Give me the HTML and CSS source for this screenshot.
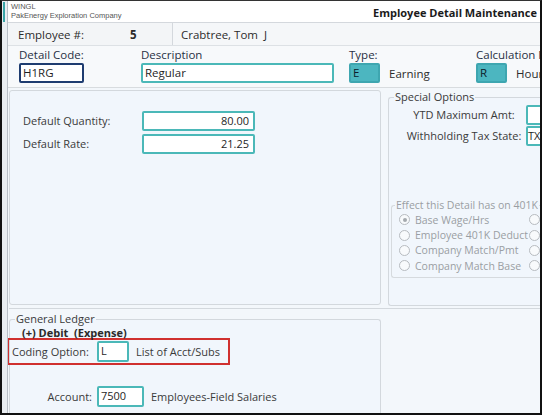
FILE: index.html
```html
<!DOCTYPE html>
<html>
<head>
<meta charset="utf-8">
<link rel="stylesheet" href="styles.css">
</head>
<body>
<div class="frame">
  <div class="side"><div class="side-mark"></div></div>
  <div class="main">
    <div class="header">
      <div class="co">
        <div class="co-app">WINGL</div>
        <div class="co-name">PakEnergy Exploration Company</div>
      </div>
      <div class="title">Employee Detail Maintenance</div>
    </div>
    <div class="emp-row">
      <div class="emp-box"><span class="emp-label">Employee #:</span><span class="emp-num">5</span></div>
      <div class="emp-name">Crabtree, Tom&nbsp; J</div>
    </div>
    <div class="detail-row">
      <div class="fld f-code">
        <div class="flabel">Detail Code:</div>
        <div class="inp inp-code">H1RG</div>
      </div>
      <div class="fld f-desc">
        <div class="flabel">Description</div>
        <div class="inp inp-desc">Regular</div>
      </div>
      <div class="fld f-type">
        <div class="flabel">Type:</div>
        <div class="pair"><div class="inp inp-fill">E</div><span class="ptext">Earning</span></div>
      </div>
      <div class="fld f-calc">
        <div class="flabel">Calculation Method:</div>
        <div class="pair"><div class="inp inp-fill">R</div><span class="ptext">Hourly</span></div>
      </div>
    </div>
    <div class="body">
      <div class="top-grid">
        <div class="panel p-default">
          <div class="row"><span class="rlabel">Default Quantity:</span><div class="inp inp-num">80.00</div></div>
          <div class="row"><span class="rlabel">Default Rate:</span><div class="inp inp-num">21.25</div></div>
        </div>
        <fieldset class="panel p-special">
          <legend>Special Options</legend>
          <div class="srow first"><span class="slabel">YTD Maximum Amt:</span><div class="inp inp-s"></div></div>
          <div class="srow"><span class="slabel">Withholding Tax State:</span><div class="inp inp-s">TX</div></div>
          <fieldset class="p401">
            <legend>Effect this Detail has on 401K</legend>
            <div class="radios">
              <div class="rad"><span class="dot on"></span>Base Wage/Hrs</div>
              <div class="rad"><span class="dot"></span>Employee 401K Deduct</div>
              <div class="rad"><span class="dot"></span>Company Match/Pmt</div>
              <div class="rad"><span class="dot"></span>Company Match Base</div>
            </div>
            <div class="radios r2">
              <div class="rad"><span class="dot"></span></div>
              <div class="rad"><span class="dot"></span></div>
              <div class="rad"><span class="dot"></span></div>
              <div class="rad"><span class="dot"></span></div>
            </div>
          </fieldset>
        </fieldset>
      </div>
      <div class="sep"></div>
      <div class="bottom-grid">
        <fieldset class="panel p-gl">
          <legend>General Ledger</legend>
          <div class="debit">(+) Debit&nbsp; (Expense)</div>
          <div class="coding">
            <span class="clabel">Coding Option:</span>
            <div class="inp inp-l">L</div>
            <span class="ctext">List of Acct/Subs</span>
          </div>
          <div class="acct">
            <span class="alabel">Account:</span>
            <div class="inp inp-a">7500</div>
            <span class="ctext">Employees-Field Salaries</span>
          </div>
        </fieldset>
      </div>
    </div>
  </div>
</div>
</body>
</html>
```
FILE: styles.css
```css
* { box-sizing: border-box; }
html, body { margin: 0; padding: 0; }
body {
  width: 542px; height: 415px; overflow: hidden;
  font-family: "Open Sans", "Noto Sans", sans-serif;
  font-size: 11px; color: #3a3a3a;
  background: #000;
}
.frame {
  display: flex; width: 542px; height: 415px;
  border-left: 2px solid #111; border-right: 2px solid #111;
  border-bottom: 2px solid #111; border-top: 1px solid #333;
  background: #f3f7fb; overflow: hidden;
}
.side {
  width: 6px; flex: none; background: #e9edf1; border-right: 1px solid #b8bec6;
  position: relative;
}
.side-mark { position: absolute; left: 1px; top: 1px; width: 2px; height: 20px; background: #3aa5a8; }
.main { width: 532px; flex: none; display: flex; flex-direction: column; overflow: hidden; }
.header {
  height: 21px; flex: none; background: #fff; display: flex; justify-content: space-between;
  align-items: flex-start; padding-left: 3px;
}
.co { font-family: "Liberation Sans", Arial, sans-serif; font-size: 7.5px; color: #555; line-height: 9px; padding-top: 1px; }
.title { font-weight: bold; font-size: 11px; color: #1b1b1b; padding-top: 4px; padding-right: 3px; }
.emp-row { height: 24px; flex: none; display: flex; border-top: 1px solid #d4d8dd; border-bottom: 1px solid #dde1e5; background: #f5f7f9; }
.emp-box { width: 164px; flex: none; border-right: 1px solid #d4d8dd; background: #f3f5f7; padding-left: 9px; display: flex; align-items: center; margin-left: 1px; }
.emp-label { width: 112px; color: #2c2c2c; font-size: 11.5px; }
.emp-num { font-weight: bold; font-size: 11.5px; color: #2a2a2a; }
.emp-name { padding-left: 8px; display: flex; align-items: center; font-size: 11.5px; color: #2c2c2c; white-space: nowrap; }
.detail-row { height: 42px; flex: none; display: flex; background: #f7f9fb; padding-left: 11px; border-bottom: 1px solid #d8dcdf; }
.fld { display: flex; flex-direction: column; flex: none; }
.flabel { font-size: 11.5px; color: #283044; line-height: 15px; padding-top: 1px; height: 17px; white-space: nowrap; }
.f-code { width: 122px; }
.f-desc { width: 208px; }
.f-type { width: 127px; }
.f-calc { width: 120px; }
.inp {
  height: 20px; border: 2px solid #4bb8b8; background: #fff; border-radius: 2px;
  font-size: 11.5px; line-height: 16px; padding: 0 2px; color: #1f1f1f; flex: none; white-space: nowrap;
}
.inp-code { width: 65px; border-color: #1e3c70; }
.inp-desc { width: 193px; }
.pair { display: flex; align-items: center; }
.inp-fill { width: 31px; background: #4cb6c0; border-color: #3ea6b0; color: #0d1c2a; }
.ptext { padding-left: 9px; font-size: 11.5px; color: #2c2c2c; white-space: nowrap; }
.body { flex: 1; padding: 2px 0 0 1px; display: flex; flex-direction: column; }
.top-grid { display: flex; height: 215px; flex: none; }
.panel { background: #f1f6fc; border: 1px solid #d3d8dd; border-radius: 3px; }
fieldset.panel { margin: 0; padding: 0; min-width: 0; }
.p-default { width: 372px; flex: none; padding: 18px 0 0 13px; }
.row { display: flex; align-items: center; height: 23px; }
.rlabel { width: 119px; font-size: 11px; color: #3a3a3a; }
.inp-num { width: 113px; text-align: right; padding-right: 4px; font-size: 11px; }
.p-special { margin: 1px 0 0 7px !important; width: 200px; flex: none; height: 215px; border-right: none !important; }
legend { font-size: 11px; color: #3a3a3a; padding: 0 1px; margin-left: 5px; line-height: 12px; white-space: nowrap; }
.srow { display: flex; align-items: center; height: 21px; }
.srow.first { margin-top: 1px; }
.slabel { width: 137px; flex: none; text-align: center; padding-left: 13px; font-size: 11px; color: #3a3a3a; white-space: nowrap; }
.inp-s { width: 40px; padding-left: 0; font-size: 11px; }
.p401 {
  margin: 53px 0 0 2px; padding: 1px 0 0 0; border: 1px solid #d6dade; border-radius: 3px;
  border-right: none; display: flex; min-width: 0; height: 79px;
}
.p401 legend { color: #9a9ea3; margin-left: 3px; font-size: 10.5px; }
.radios { width: 137px; flex: none; padding-left: 7px; }
.r2 { width: 40px; padding-left: 0; }
.rad { height: 15.4px; display: flex; align-items: center; color: #9a9ea3; font-size: 10.5px; white-space: nowrap; }
.dot { width: 11px; height: 11px; border: 1px solid #b7bbc0; border-radius: 50%; margin-right: 5px; background: #f8fafc; display: inline-block; flex: none; position: relative; }
.dot.on::after { content: ""; position: absolute; left: 2.5px; top: 2.5px; width: 4px; height: 4px; border-radius: 50%; background: #a5a9ae; }
.sep { height: 4px; flex: none; border-bottom: 1px solid #d3d8dd; margin-bottom: 4px; }
.bottom-grid { display: flex; flex: 1; }
.p-gl { width: 372px; flex: none; border-bottom: none !important; border-radius: 3px 3px 0 0 !important; }
.debit { font-weight: bold; font-size: 11px; color: #2a2a2a; padding-left: 12px; line-height: 16px; height: 13px; }
.coding {
  margin-left: -3px; width: 223px; height: 27px; border: 2px solid #d0302f;
  display: flex; align-items: center; padding-left: 3px;
}
.clabel { font-size: 11px; color: #3a3a3a; width: 85px; flex: none; }
.inp-l { width: 32px; height: 21px; font-size: 11px; }
.ctext { padding-left: 7px; font-size: 11px; color: #3a3a3a; white-space: nowrap; }
.acct { display: flex; align-items: center; margin-top: 21px; height: 21px; }
.alabel { width: 87px; flex: none; text-align: right; padding-right: 5px; font-size: 11px; color: #3a3a3a; }
.inp-a { width: 47px; height: 21px; font-size: 11px; }
```
